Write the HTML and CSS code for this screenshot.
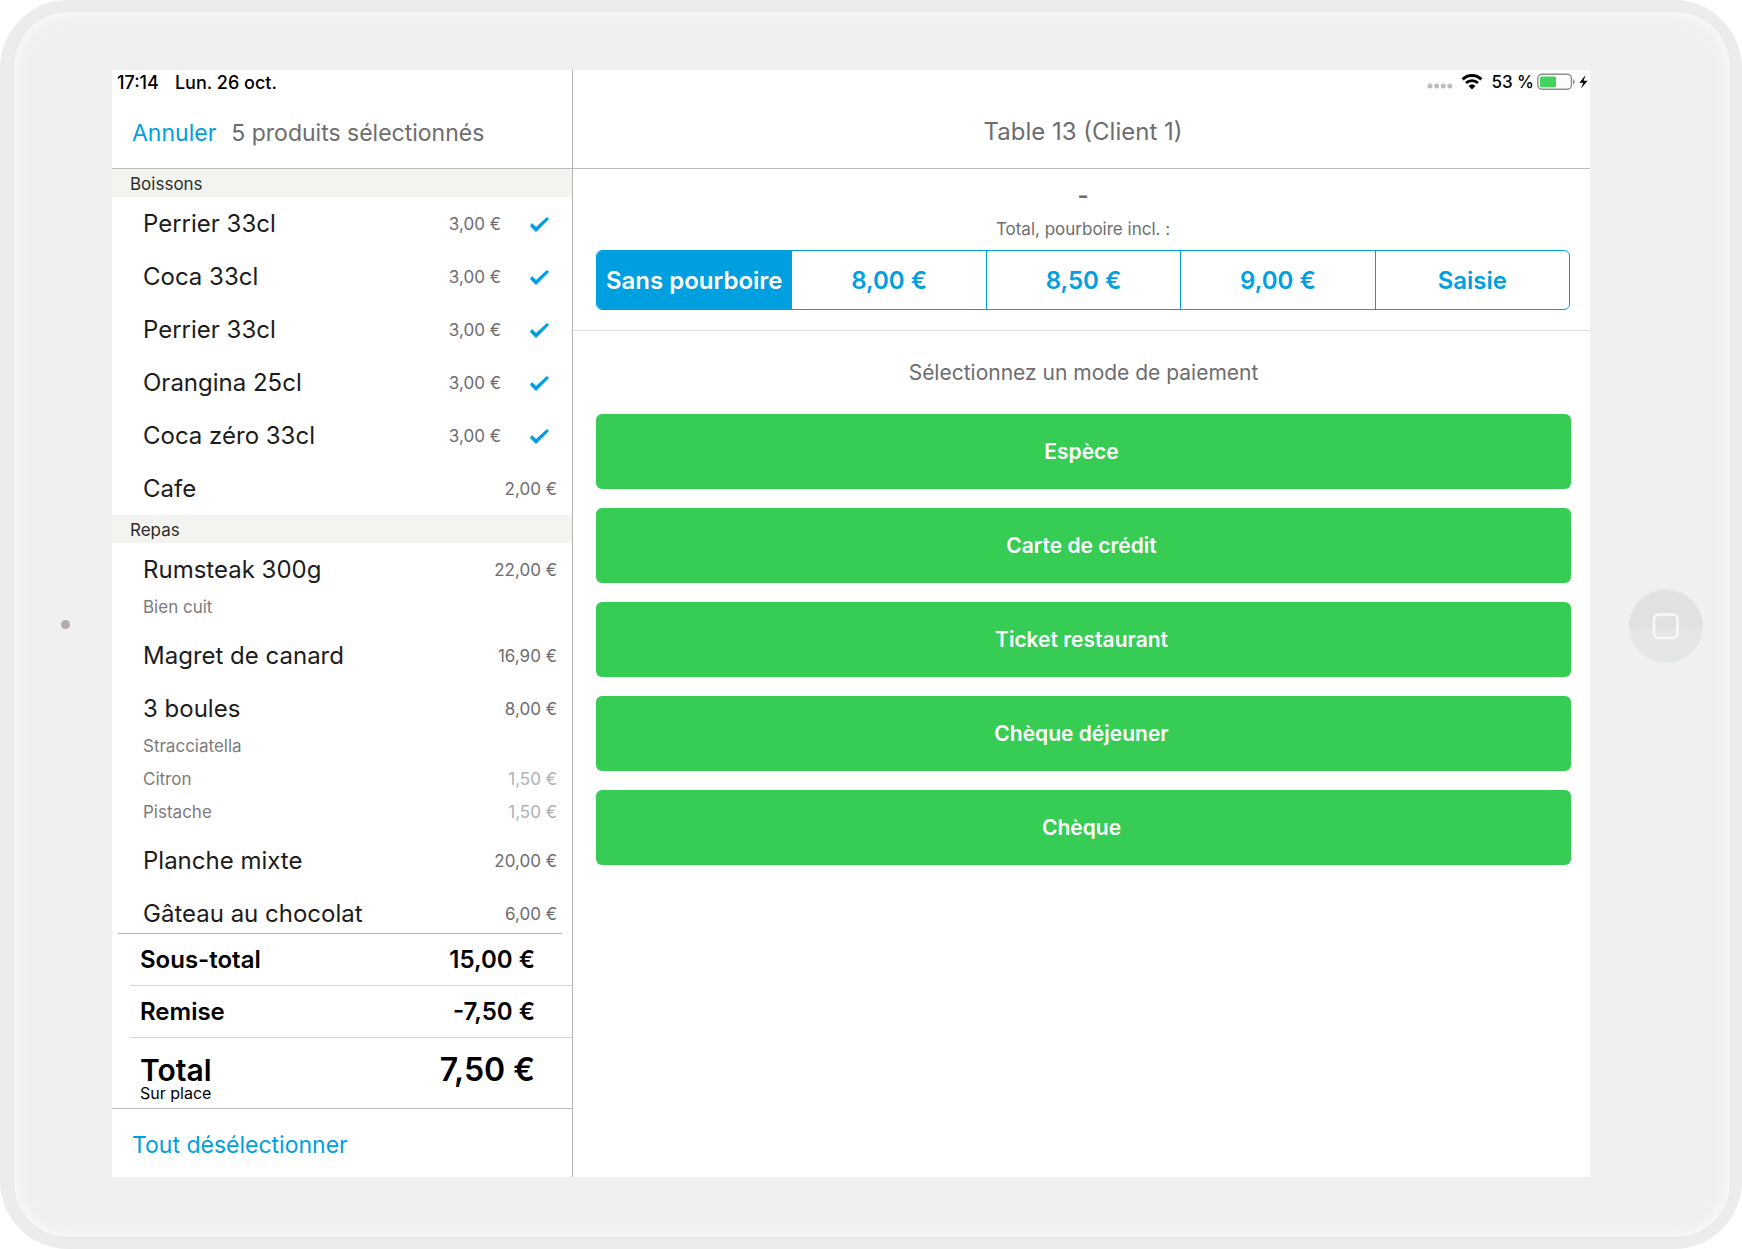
FILE: index.html
```html
<!DOCTYPE html>
<html lang="fr">
<head>
<meta charset="utf-8">
<meta name="viewport" content="width=device-width, initial-scale=1">
<title>Table 13 (Client 1)</title>
<link rel="stylesheet" href="styles.css">
</head>
<body>
<div class="device">
  <div class="bezel">
    <div class="camera-side"><span class="camera"></span></div>
    <main class="screen">
      <section class="order">
        <header class="pane-header">
          <div class="status status-left">
            <span>17:14</span>
            <span>Lun. 26 oct.</span>
          </div>
          <div class="order-nav">
            <button type="button" class="link-button">Annuler</button>
            <h1 class="nav-title order-title">5 produits sélectionnés</h1>
          </div>
        </header>

        <div class="items">
          <h2 class="category">Boissons</h2>
          <div class="item">
            <label class="item-row"><span class="item-name">Perrier 33cl</span><span class="price">3,00 €</span><input class="tick" type="checkbox" checked></label>
          </div>
          <div class="item">
            <label class="item-row"><span class="item-name">Coca 33cl</span><span class="price">3,00 €</span><input class="tick" type="checkbox" checked></label>
          </div>
          <div class="item">
            <label class="item-row"><span class="item-name">Perrier 33cl</span><span class="price">3,00 €</span><input class="tick" type="checkbox" checked></label>
          </div>
          <div class="item">
            <label class="item-row"><span class="item-name">Orangina 25cl</span><span class="price">3,00 €</span><input class="tick" type="checkbox" checked></label>
          </div>
          <div class="item">
            <label class="item-row"><span class="item-name">Coca zéro 33cl</span><span class="price">3,00 €</span><input class="tick" type="checkbox" checked></label>
          </div>
          <div class="item">
            <label class="item-row"><span class="item-name">Cafe</span><span class="price">2,00 €</span><input class="tick" type="checkbox"></label>
          </div>

          <h2 class="category">Repas</h2>
          <div class="item">
            <label class="item-row"><span class="item-name">Rumsteak 300g</span><span class="price">22,00 €</span><input class="tick" type="checkbox"></label>
            <div class="option"><span>Bien cuit</span></div>
          </div>
          <div class="item">
            <label class="item-row"><span class="item-name">Magret de canard</span><span class="price">16,90 €</span><input class="tick" type="checkbox"></label>
          </div>
          <div class="item">
            <label class="item-row"><span class="item-name">3 boules</span><span class="price">8,00 €</span><input class="tick" type="checkbox"></label>
            <div class="option"><span>Stracciatella</span></div>
            <div class="option"><span>Citron</span><span class="option-price">1,50 €</span></div>
            <div class="option"><span>Pistache</span><span class="option-price">1,50 €</span></div>
          </div>
          <div class="item">
            <label class="item-row"><span class="item-name">Planche mixte</span><span class="price">20,00 €</span><input class="tick" type="checkbox"></label>
          </div>
          <div class="item">
            <label class="item-row"><span class="item-name">Gâteau au chocolat</span><span class="price">6,00 €</span><input class="tick" type="checkbox"></label>
          </div>
        </div>

        <div class="totals">
          <div class="total-row"><span>Sous-total</span><span>15,00 €</span></div>
          <div class="total-row"><span>Remise</span><span>-7,50 €</span></div>
          <div class="total-row grand">
            <div class="grand-label"><span>Total</span><span class="place">Sur place</span></div>
            <span>7,50 €</span>
          </div>
        </div>
        <footer class="order-footer">
          <button type="button" class="link-button">Tout désélectionner</button>
        </footer>
      </section>

      <section class="payment">
        <header class="pane-header">
          <div class="status status-right">
            <svg class="signal" width="26" height="6" viewBox="0 0 26 6" fill="#bdbdbd"><circle cx="3" cy="3" r="2.5"/><circle cx="9.6" cy="3" r="2.5"/><circle cx="16.2" cy="3" r="2.5"/><circle cx="22.8" cy="3" r="2.5"/></svg>
            <svg class="wifi" width="22" height="16" viewBox="0 0 22 16"><path d="M1.6 5.400A13.400 13.400 0 0 1 20.400 5.400" fill="none" stroke="#000" stroke-width="3"/><path d="M5 9A8.600 8.600 0 0 1 17 9" fill="none" stroke="#000" stroke-width="2.800"/><path d="M7.600 11.900a4.900 4.900 0 0 1 6.800 0L11 15.400z"/></svg>
            <span class="charge">53 %</span>
            <svg width="52" height="18" viewBox="0 0 52 18"><rect x="0.8" y="1.3" width="33.6" height="15" rx="4" fill="#fff" stroke="#8e8e8e" stroke-width="1.4"/><rect x="3" y="3.4" width="16" height="10.8" rx="1.5" fill="#42d45c"/><path d="M36 6.200c2.200.6 2.200 4.600 0 5.200z" fill="#8e8e8e"/><path d="M48.600 2 42.400 9.800h3.800L44 15.600l6.600-7.800h-4z"/></svg>
          </div>
          <h2 class="nav-title payment-title">Table 13 (Client 1)</h2>
        </header>

        <div class="tip">
          <p class="tip-amount">-</p>
          <fieldset class="tip-choice">
            <legend class="tip-legend">Total, pourboire incl. :</legend>
            <div class="segments">
              <label class="segment"><input type="radio" name="tip" checked>Sans pourboire</label>
              <label class="segment"><input type="radio" name="tip">8,00 €</label>
              <label class="segment"><input type="radio" name="tip">8,50 €</label>
              <label class="segment"><input type="radio" name="tip">9,00 €</label>
              <label class="segment"><input type="radio" name="tip">Saisie</label>
            </div>
          </fieldset>
        </div>

        <div class="methods">
          <h3 class="methods-title">Sélectionnez un mode de paiement</h3>
          <button type="button" class="method">Espèce</button>
          <button type="button" class="method">Carte de crédit</button>
          <button type="button" class="method">Ticket restaurant</button>
          <button type="button" class="method">Chèque déjeuner</button>
          <button type="button" class="method">Chèque</button>
        </div>
      </section>
    </main>
    <div class="home-side">
      <svg width="74" height="74" viewBox="0 0 74 74"><circle cx="37" cy="37" r="37" fill="#e5e7e6"/><path d="M0 39a37 37 0 0 1 74 0Q37 42.500 0 39z" fill="#e0e1e2"/><rect x="25" y="25.500" width="23.500" height="23.500" rx="5" fill="none" stroke="#f8f8f9" stroke-width="2.600"/></svg>
    </div>
  </div>
</div>
</body>
</html>
```

FILE: styles.css
```css
* {
  box-sizing: border-box;
}

body {
  margin: 0;
  background: #fff;
  color: #1c1c1c;
  font-family: Inter, "Liberation Sans", sans-serif;
}

h1, h2, h3, p {
  margin: 0;
  font-weight: 400;
}

button {
  border: 0;
  padding: 0;
  background: none;
  font: inherit;
  cursor: pointer;
}

/* Tablet body */
.device {
  display: flex;
  height: 100vh;
  min-height: 800px;
  padding: 12px 12px 12px 14px;
  border-radius: 68px;
  background: #ececec;
}

.bezel {
  flex: 1;
  display: grid;
  grid-template-columns: 98px minmax(0, 1fr) 140px;
  grid-template-rows: minmax(0, 1fr);
  padding: 58px 0 60px;
  border-radius: 54px;
  background: #f0f0f0;
  box-shadow: inset 0 0 14px 2px #fafafa, 0 0 1px 1px #e8e8e8;
}

.camera-side,
.home-side {
  display: flex;
  align-items: center;
  justify-content: center;
}

.camera-side {
  padding: 2px 0 0 4px;
}

.home-side {
  padding: 4px 0 0 12px;
}

.camera {
  width: 9px;
  height: 9px;
  border-radius: 50%;
  background: #b3abab;
}

.screen {
  display: grid;
  grid-template-columns: 461px minmax(0, 1fr);
  grid-template-rows: minmax(0, 1fr);
  background: #fff;
}

.order,
.payment {
  display: flex;
  flex-direction: column;
  min-height: 0;
}

.order {
  border-right: 1px solid #b4b4b6;
}

/* Headers */
.pane-header {
  display: flex;
  flex-direction: column;
  height: 99px;
  flex: none;
  border-bottom: 1px solid #bcbcbe;
}

.status {
  display: flex;
  align-items: center;
  height: 24px;
  color: #000;
  font-size: 17px;
  font-weight: 500;
}

.status-left {
  gap: 16px;
  padding: 0 5px;
  font-size: 18px;
}

.status-right {
  justify-content: flex-end;
  gap: 8px;
  padding: 2px 1px 0;
}

.signal {
  margin-top: 8px;
}

.charge {
  margin-right: -5px;
}

.order-nav {
  display: flex;
  align-items: center;
  gap: 15px;
  height: 74px;
  padding: 4px 20px 0;
}

.link-button {
  color: #009fe0;
  font-size: 23px;
}

.nav-title {
  color: #6d6d6f;
  font-size: 24px;
}

.order-title {
  font-size: 23px;
}

.payment-title {
  padding: 4px 0 0 3px;
  line-height: 72px;
  text-align: center;
}

/* Ordered products */
.items {
  flex: 1;
  min-height: 0;
  overflow-y: auto;
  scrollbar-width: none;
}

.category {
  height: 28px;
  padding: 0 18px;
  background: #f3f4ef;
  color: #2c2c2c;
  font-size: 17px;
  line-height: 31px;
}

.item {
  padding: 5px 15px 5px 31px;
}

.item-row {
  display: flex;
  align-items: center;
  height: 43px;
}

.item-name {
  flex: 1;
  font-size: 24px;
}

.price {
  color: #6d6d6f;
  font-size: 17px;
}

.tick {
  appearance: none;
  width: 0;
  height: 15px;
  margin: 0;
  background: #009fe0;
  clip-path: polygon(0 9px, 2px 6px, 6px 10px, 17px 0, 19px 2px, 6px 15px);
}

.tick:checked {
  width: 19px;
  margin: 2px 8px 0 29px;
}

.option {
  display: flex;
  justify-content: space-between;
  color: #7b7b7d;
  font-size: 17px;
  line-height: 33px;
}

.option-price {
  color: #b0b0b2;
}

/* Totals */
.totals {
  flex: none;
  color: #000;
  font-size: 24px;
  font-weight: 600;
}

.total-row {
  display: flex;
  align-items: center;
  justify-content: space-between;
  height: 52px;
  margin-left: 18px;
  padding: 0 37px 0 10px;
  border-top: 1px solid #d6d6d8;
}

.total-row:first-child {
  margin: 0 10px 0 6px;
  padding: 0 27px 0 22px;
  border-color: #b4b4b6;
}

.total-row.grand {
  align-items: flex-start;
  height: 71px;
  padding-top: 14px;
  font-size: 32px;
  line-height: 36px;
}

.grand-label {
  display: flex;
  flex-direction: column;
  padding-top: 2px;
  font-size: 30px;
  line-height: 32px;
}

.place {
  font-size: 16px;
  font-weight: 400;
  line-height: 14px;
}

.order-footer {
  display: flex;
  align-items: center;
  height: 69px;
  flex: none;
  padding: 4px 20px 0;
  border-top: 1px solid #bcbcbe;
}

/* Tip selection */
.tip {
  padding: 11px 20px 20px 23px;
  border-bottom: 1px solid #dededf;
  color: #6d6d6f;
  text-align: center;
}

.tip-amount {
  font-size: 24px;
  font-weight: 600;
  line-height: 32px;
}

.tip-choice {
  min-width: 0;
  margin: 0;
  padding: 0;
  border: 0;
}

.tip-legend {
  width: 100%;
  padding: 0 0 4px;
  font-size: 17px;
  line-height: 34px;
}

.segments {
  display: grid;
  grid-template-columns: repeat(5, minmax(0, 1fr));
  height: 60px;
  overflow: hidden;
  border: 1px solid #009fe0;
  border-radius: 6px;
}

.segment {
  display: flex;
  align-items: center;
  justify-content: center;
  color: #009fe0;
  font-size: 24px;
  font-weight: 600;
  white-space: nowrap;
  cursor: pointer;
}

.segment + .segment {
  border-left: 1px solid #009fe0;
}

.segment input {
  appearance: none;
  width: 0;
  margin: 0;
}

.segment:has(input:checked) {
  background: #009fe0;
  color: #fff;
}

/* Payment methods */
.methods {
  display: flex;
  flex-direction: column;
  gap: 19px;
  padding: 25px 19px 0 23px;
}

.methods-title {
  padding-bottom: 5px;
  color: #6d6d6f;
  font-size: 21px;
  line-height: 34px;
  text-align: center;
}

.method {
  height: 75px;
  padding-right: 4px;
  border-radius: 6px;
  background: #37cc54;
  color: #fff;
  font-size: 21px;
  font-weight: 600;
}
```
